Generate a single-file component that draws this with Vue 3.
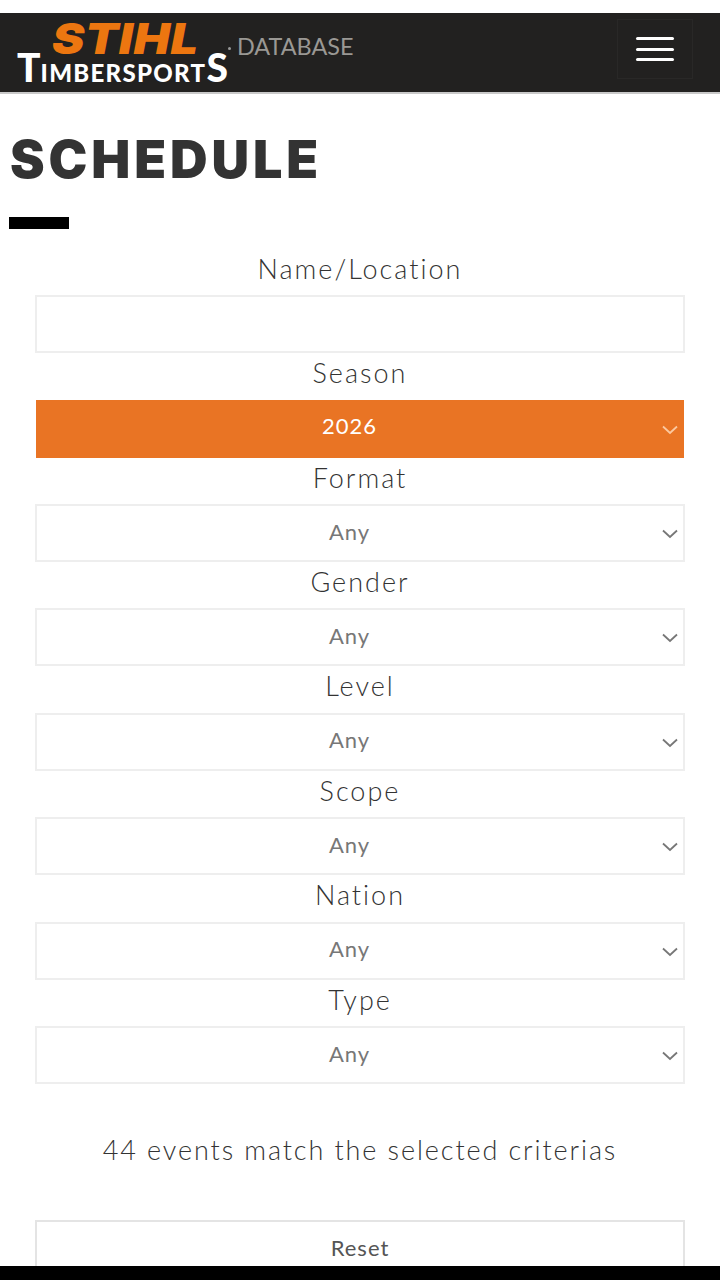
<script setup>
const fields = [
  { label: 'Name/Location', kind: 'input' },
  { label: 'Season', value: '2026', active: true },
  { label: 'Format', value: 'Any' },
  { label: 'Gender', value: 'Any' },
  { label: 'Level', value: 'Any' },
  { label: 'Scope', value: 'Any' },
  { label: 'Nation', value: 'Any' },
  { label: 'Type', value: 'Any' },
]
</script>

<template>
  <div class="screen">
    <header class="topbar">
      <div class="logo">
        <span class="logo-stihl">STIHL</span>
        <span class="logo-sports"><b>T</b>IMBERSPORT<b>S</b></span>
      </div>
      <span class="logo-dot"></span>
      <span class="database">DATABASE</span>
      <button class="burger" aria-label="Menu">
        <i></i><i></i><i></i>
      </button>
    </header>

    <main class="page">
      <h1>SCHEDULE</h1>
      <div class="rule"></div>

      <form class="filters" @submit.prevent>
        <div v-for="f in fields" :key="f.label" class="field">
          <label>{{ f.label }}</label>
          <div v-if="f.kind === 'input'" class="control"></div>
          <div v-else :class="['control', 'select', { active: f.active }]">
            <span>{{ f.value }}</span>
            <svg class="chev" width="16" height="10" viewBox="0 0 16 10" fill="none">
              <path d="M1 1.500 8 8l7-6.500" stroke="currentColor" stroke-width="1.800" />
            </svg>
          </div>
        </div>
      </form>

      <p class="count">44 events match the selected criterias</p>
      <button class="reset">Reset</button>
    </main>

    <div class="bottom"></div>
  </div>
</template>

<style scoped>
.screen {
  position: relative;
  width: 720px;
  height: 1280px;
  overflow: hidden;
  background: #fff;
  color: #444;
  font-family: Lato, "Open Sans", sans-serif;
}

.topbar {
  display: flex;
  align-items: flex-start;
  height: 79px;
  margin-top: 13px;
  border-bottom: 2px solid #c9c9c9;
  background: #222120;
}

.logo {
  display: flex;
  flex-direction: column;
  width: 211px;
  margin: 10px 0 0 17px;
  font-family: Inter, "Liberation Sans", sans-serif;
}

.logo-stihl {
  height: 32px;
  margin-left: 35px;
  color: #ec7610;
  font-size: 43px;
  font-style: italic;
  font-weight: 900;
  line-height: 31px;
  letter-spacing: 0.500px;
  transform: scaleX(1.130);
  transform-origin: left center;
}

.logo-sports {
  display: flex;
  align-items: baseline;
  height: 24px;
  color: #fff;
  font-family: Lato, sans-serif;
  font-size: 24px;
  font-weight: 900;
  line-height: 24px;
  letter-spacing: 1.300px;
  white-space: nowrap;
}

.logo-sports b {
  font-size: 39px;
  font-weight: 900;
  letter-spacing: 0;
}

.logo-dot {
  width: 3px;
  height: 3px;
  margin: 34px 0 0 0;
  border-radius: 50%;
  background: #999;
}

.database {
  margin: 20px 0 0 6px;
  color: #9a9894;
  font-size: 23.400px;
  line-height: 27px;
}

.burger {
  display: flex;
  flex-direction: column;
  gap: 7.500px;
  align-items: center;
  justify-content: center;
  width: 76px;
  height: 60px;
  margin: 6px 27px 0 auto;
  padding: 0;
  border: 1px solid #292827;
  background: transparent;
}

.burger i {
  display: block;
  width: 38px;
  height: 3px;
  border-radius: 2px;
  background: #fff;
}

.page {
  display: flex;
  flex-direction: column;
}

h1 {
  margin: 38px 0 0 10px;
  color: #333;
  font-family: Inter, Lato, sans-serif;
  font-size: 52px;
  font-weight: 900;
  line-height: 56px;
  letter-spacing: 3.900px;
}

.rule {
  width: 60px;
  height: 12px;
  margin: 29px 0 0 9px;
  background: #000;
}

.filters {
  display: flex;
  flex-direction: column;
  margin: 19.900px 35px 0;
}

.field {
  display: flex;
  flex-direction: column;
  height: 104.400px;
}

.field label {
  height: 46.400px;
  text-align: center;
  font-size: 27px;
  font-weight: 300;
  line-height: 40px;
  letter-spacing: 2px;
  color: #333;
}

.control {
  box-sizing: border-box;
  height: 58px;
  border: 2px solid #eee;
  background: #fff;
}

.select {
  display: flex;
  align-items: center;
  justify-content: center;
  position: relative;
  padding: 0 21px 4px 0;
  color: #777;
  font-size: 22px;
  letter-spacing: 1px;
}

.active {
  margin: 0 1px;
  padding-bottom: 6px;
  border-color: #e97424;
  background: #e97424;
  color: #fff;
}

.chev {
  position: absolute;
  right: 5px;
  top: 23px;
  color: #777;
}

.active .chev {
  right: 4px;
  color: #fbc9a0;
}

.count {
  margin: 47px 0 0;
  text-align: center;
  font-size: 27px;
  font-weight: 300;
  line-height: 38px;
  letter-spacing: 1.900px;
  color: #333;
}

.reset {
  box-sizing: border-box;
  height: 56px;
  margin: 51px 35px 0;
  padding: 0 0 2px;
  border: 2px solid #e4e4e4;
  background: #fff;
  color: #555;
  font-family: inherit;
  font-size: 22px;
  letter-spacing: 1px;
}

.bottom {
  position: absolute;
  left: 0;
  right: 0;
  bottom: 0;
  height: 14px;
  background: #000;
}
</style>

<style>
html, body {
  margin: 0;
  background: #000;
}
</style>
